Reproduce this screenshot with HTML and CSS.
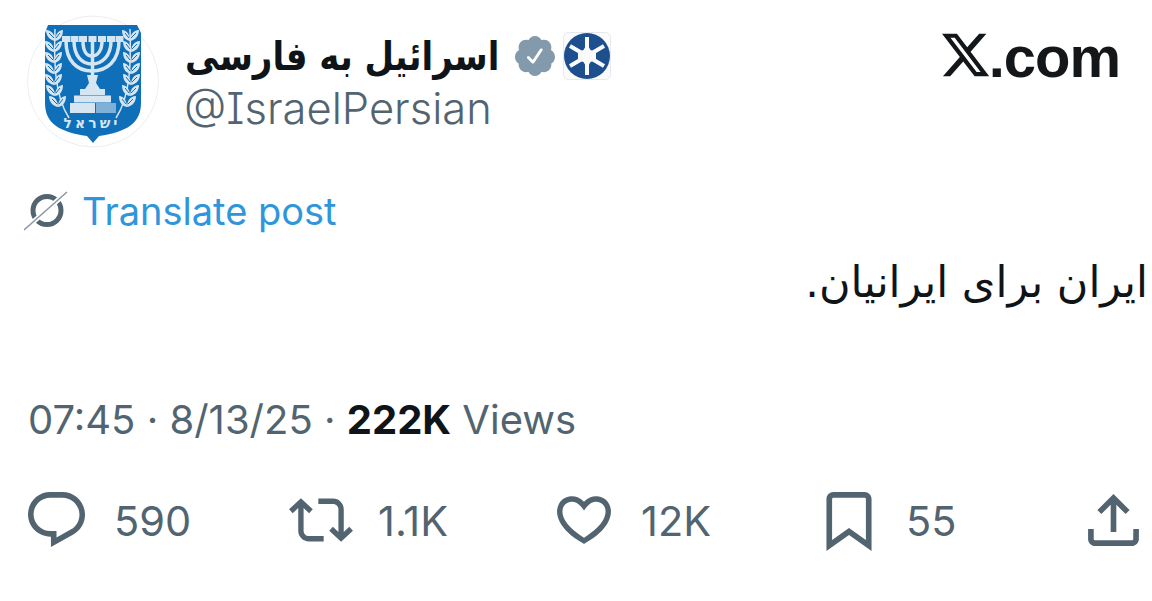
FILE: index.html
```html
<!DOCTYPE html>
<html lang="en">
<head>
  <meta charset="UTF-8">
  <title>Post</title>
  <link rel="stylesheet" href="styles.css">
</head>
<body>

  <div class="post">
    <div class="post-header">
      <div class="avatar">
        <svg viewBox="0 0 132 133" width="132" height="133">
          <defs>
            <g id="leaf-pair">
              <path d="M0 6C-6 5 -9 0 -9 -5C-3 -5 0 0 0 6Z" fill="#d5e5f2"/>
              <path d="M0 6C6 5 8 0 8 -5C3 -5 0 0 0 6Z" fill="#d5e5f2"/>
              <path d="M-1 3L-6 -2M1 3L5 -2" stroke="#0f6fb8" stroke-width="1"/>
            </g>
            <g id="branch">
              <path d="M28 14C27 45 27 80 42 103" fill="none" stroke="#d5e5f2" stroke-width="1.5"/>
              <use href="#leaf-pair" x="28" y="20"/>
              <use href="#leaf-pair" x="27" y="31"/>
              <use href="#leaf-pair" x="27" y="42"/>
              <use href="#leaf-pair" x="27" y="53"/>
              <use href="#leaf-pair" x="27" y="64"/>
              <use href="#leaf-pair" x="28" y="75"/>
              <use href="#leaf-pair" x="31" y="86"/>
            </g>
          </defs>
          <circle cx="66" cy="66.5" r="65.5" fill="#fff" stroke="#eeeeee"/>
          <path d="M21 10H110L114 18V88C114 108 100 117 72 121L66 128L60 121C32 117 18 108 18 88V18Z" fill="#0f6fb8"/>
          <use href="#branch"/>
          <use href="#branch" transform="translate(131 0) scale(-1 1)"/>
          <g fill="none" stroke="#d5e5f2" stroke-width="3.5">
            <path d="M39 26C39 46 50 56 65 56C80 56 92 46 92 26"/>
            <path d="M47 26C47 41 55 49 65 49C75 49 84 41 84 26"/>
            <path d="M56 26C56 35 59 41 65 41C71 41 75 35 75 26"/>
            <path d="M65.5 22V72"/>
          </g>
          <g fill="#d5e5f2">
            <rect x="35" y="21" width="8" height="6"/>
            <rect x="43.500" y="21" width="8" height="6"/>
            <rect x="52" y="21" width="8" height="6"/>
            <rect x="61.500" y="21" width="8" height="6"/>
            <rect x="71" y="21" width="8" height="6"/>
            <rect x="80" y="21" width="8" height="6"/>
            <rect x="88.500" y="21" width="8" height="6"/>
            <path d="M60 60H71L69 68L73 74H58L62 68Z"/>
            <rect x="53" y="74" width="25" height="6"/>
            <rect x="47" y="80.500" width="37" height="7"/>
            <rect x="43" y="88" width="25" height="10"/>
            <rect x="69" y="88" width="20" height="10" fill="#7fb0d8"/>
          </g>
          <text class="emblem-text" x="65" y="113" text-anchor="middle">ישראל</text>
        </svg>
      </div>

      <div class="names">
        <div class="name-row">
          <span class="name" dir="rtl">اسرائیل به فارسی</span>
          <svg class="badge" viewBox="1.500 1.500 21 21" width="40" height="40">
            <path fill-rule="evenodd" fill="#829aab" d="M22.5 12.5c0-1.58-.875-2.95-2.148-3.6.154-.435.238-.905.238-1.4 0-2.21-1.71-3.998-3.818-3.998-.47 0-.92.084-1.336.25C14.818 2.415 13.51 1.5 12 1.5s-2.816.917-3.437 2.25c-.415-.165-.866-.25-1.336-.25-2.11 0-3.818 1.79-3.818 4 0 .494.083.964.237 1.4-1.272.65-2.147 2.018-2.147 3.6 0 1.495.782 2.798 1.942 3.486-.02.17-.032.34-.032.514 0 2.21 1.708 4 3.818 4 .47 0 .92-.086 1.335-.25.62 1.334 1.926 2.25 3.437 2.25 1.512 0 2.818-.916 3.437-2.25.415.163.865.248 1.336.248 2.11 0 3.818-1.79 3.818-4 0-.174-.012-.344-.033-.513 1.158-.687 1.943-1.99 1.943-3.484zm-6.616-3.334l-4.334 6.5c-.145.217-.382.334-.625.334-.143 0-.288-.04-.416-.126l-.115-.094-2.415-2.415c-.293-.293-.293-.768 0-1.06s.768-.294 1.06 0l1.77 1.767 3.825-5.74c.23-.345.696-.436 1.04-.207.346.23.44.696.21 1.04z"/>
          </svg>
          <svg class="org-logo" viewBox="0 0 48 48" width="48" height="48">
            <rect x="0.5" y="0.5" width="47" height="47" rx="5" fill="#fbfbfc" stroke="#e6e8ec"/>
            <circle cx="24" cy="24" r="23" fill="#1d4f8e"/>
            <path d="M24 24V5M24 24V43M24 24L41 14M24 24L7 14M24 24L41 34M24 24L7 34" stroke="#fbfbfc" stroke-width="4"/>
            <path d="M24 12L27.500 18L33 20V28L27.500 30L24 36L20.500 30L15 28V20L20.500 18Z" fill="#fbfbfc"/>
          </svg>
        </div>
        <div class="handle">@IsraelPersian</div>
      </div>

      <div class="site-mark">
        <svg viewBox="1.25 2.25 21.5 19.5" width="47" height="44">
          <path fill="#14171a" d="M18.244 2.25h3.308l-7.227 8.26 8.502 11.24H16.17l-5.214-6.817L4.99 21.75H1.68l7.73-8.835L1.254 2.25H8.08l4.713 6.231zm-1.161 17.52h1.833L7.084 4.126H5.117z"/>
        </svg>
        <span>.com</span>
      </div>
    </div>

    <div class="translate">
      <svg viewBox="0 0 44 40" width="44" height="40">
        <circle cx="23" cy="19.500" r="14" fill="none" stroke="#536471" stroke-width="5"/>
        <path d="M43 1L0 39" stroke="#fff" stroke-width="5"/>
        <path d="M43 1L0 39" stroke="#8b98a3" stroke-width="1.500"/>
      </svg>
      <span>Translate post</span>
    </div>

    <div class="post-text" dir="rtl">ایران برای ایرانیان.</div>

    <div class="meta">07:45 · 8/13/25 · <b>222K</b> Views</div>

    <div class="actions">
      <div class="action">
        <svg viewBox="1.75 2 20.5 19.7" width="57" height="55">
          <path d="M1.751 10c0-4.42 3.584-8 8.005-8h4.366c4.49 0 8.129 3.64 8.129 8.13 0 2.96-1.607 5.68-4.196 7.11l-8.054 4.46v-3.69h-.067c-4.49.1-8.183-3.51-8.183-8.01zm8.005-6c-3.317 0-6.005 2.69-6.005 6 0 3.37 2.77 6.08 6.138 6.01l.351-.01h1.761v2.3l5.087-2.81c1.951-1.08 3.163-3.13 3.163-5.36 0-3.39-2.744-6.13-6.129-6.13H9.756z"/>
        </svg>
        <span>590</span>
      </div>
      <div class="action action-repost">
        <svg viewBox="0.05 3.8 23.9 16.4" width="64" height="44">
          <path d="M4.5 3.88l4.432 4.14-1.364 1.46L5.5 7.55V16c0 1.1.896 2 2 2H13v2H7.5c-2.209 0-4-1.79-4-4V7.55L1.432 9.48.068 8.02 4.5 3.88zM16.5 6H11V4h5.5c2.209 0 4 1.79 4 4v8.45l2.068-1.93 1.364 1.46-4.432 4.14-4.432-4.14 1.364-1.46 2.068 1.93V8c0-1.1-.896-2-2-2z"/>
        </svg>
        <span>1.1K</span>
      </div>
      <div class="action">
        <svg viewBox="1.7 3.4 20.6 17.8" width="56" height="48">
          <path d="M16.697 5.5c-1.222-.06-2.679.51-3.89 2.16l-.805 1.09-.806-1.09C9.984 6.01 8.526 5.44 7.304 5.5c-1.243.07-2.349.78-2.91 1.91-.552 1.12-.633 2.78.479 4.82 1.074 1.97 3.257 4.27 7.129 6.61 3.87-2.34 6.052-4.64 7.126-6.61 1.111-2.04 1.03-3.7.477-4.82-.561-1.13-1.666-1.84-2.908-1.91zm4.187 7.69c-1.351 2.48-4.001 5.12-8.379 7.67l-.503.3-.504-.3c-4.379-2.55-7.029-5.19-8.382-7.67-1.36-2.5-1.41-4.86-.514-6.67.887-1.79 2.647-2.91 4.601-3.01 1.651-.09 3.368.56 4.798 2.01 1.429-1.45 3.146-2.1 4.796-2.01 1.954.1 3.714 1.22 4.601 3.01.896 1.81.846 4.17-.514 6.67z"/>
        </svg>
        <span>12K</span>
      </div>
      <div class="action action-bookmark">
        <svg viewBox="4 2 16 20.94" width="46" height="59">
          <path d="M4 4.5C4 3.12 5.119 2 6.5 2h11C18.881 2 20 3.12 20 4.5v18.44l-8-5.71-8 5.71V4.5zM6.5 4c-.276 0-.5.22-.5.5v14.56l6-4.29 6 4.29V4.5c0-.28-.224-.5-.5-.5h-11z"/>
        </svg>
        <span>55</span>
      </div>
      <div class="action">
        <svg viewBox="3 2.59 18 18.41" width="51" height="52">
          <path d="M12 2.59l5.7 5.7-1.41 1.42L13 6.41V16h-2V6.41l-3.3 3.3-1.41-1.42L12 2.59zM21 15l-.02 3.51c0 1.38-1.12 2.49-2.5 2.49H5.5C4.12 21 3 19.88 3 18.5V15h2v3.5c0 .28.22.5.5.5h12.98c.28 0 .5-.22.5-.5L19 15h2z"/>
        </svg>
      </div>
    </div>
  </div>

</body>
</html>
```

FILE: styles.css
```css
body {
  margin: 0;
  background: #fff;
  font-family: Inter, "Noto Sans", "DejaVu Sans", sans-serif;
  color: #536471;
}

.post {
  height: 601px;
  padding: 15px 4px 0 27px;
  box-sizing: border-box;
  overflow: hidden;
}

.post-header {
  display: flex;
  align-items: flex-start;
  height: 133px;
}

.avatar {
  width: 132px;
  height: 133px;
}

.avatar svg,
.action svg,
.translate svg,
.site-mark svg,
.name-row svg {
  display: block;
  flex: none;
}

.emblem-text {
  font-family: "DejaVu Sans", sans-serif;
  font-size: 14px;
  font-weight: bold;
  fill: #d5e5f2;
  letter-spacing: 3px;
}

.names {
  margin-left: 26px;
  display: flex;
  flex-direction: column;
}

.name-row {
  display: flex;
  align-items: center;
  width: 425px;
  height: 52px;
  margin-top: 15px;
}

.name {
  flex: none;
  margin-right: -40px;
  font-family: "DejaVu Sans", sans-serif;
  font-size: 40px;
  font-weight: bold;
  color: #0f1419;
  white-space: nowrap;
  transform: scaleX(0.85);
  transform-origin: left center;
}

.badge {
  margin-right: 8px;
}

.handle {
  margin-left: -1px;
  font-size: 43.5px;
  font-weight: 300;
  font-feature-settings: "cv08";
  line-height: 50px;
  margin-top: 1px;
}

.site-mark {
  margin-left: auto;
  margin-right: 28px;
  margin-top: 18px;
  display: flex;
  align-items: flex-end;
  font-family: "Liberation Sans", sans-serif;
  font-weight: bold;
  font-size: 58px;
  letter-spacing: -1px;
  line-height: 44px;
  color: #14171a;
}

.site-mark span {
  margin-bottom: -2px;
}

.translate {
  display: flex;
  align-items: center;
  gap: 14px;
  margin-top: 42px;
  height: 42px;
  margin-left: -3px;
  font-size: 38px;
  color: #2f96dc;
}

.post-text {
  margin-top: 25px;
  font-family: "DejaVu Sans", sans-serif;
  font-size: 43px;
  line-height: 50px;
  color: #0f1419;
}

.meta {
  margin-top: 89px;
  margin-left: 1px;
  font-size: 40px;
  line-height: 48px;
}

.meta b {
  color: #0f1419;
}

.actions {
  display: grid;
  grid-template-columns: 261px 267px 270px 262px auto;
  margin-top: 44px;
  margin-left: 1px;
  height: 60px;
  align-items: center;
}

.action {
  display: flex;
  align-items: center;
  gap: 29px;
  font-size: 41.5px;
}

.action span {
  padding-top: 3px;
}

.action svg {
  fill: #536471;
}

.action-repost {
  gap: 25px;
}

.action-bookmark {
  gap: 34px;
}

.action-bookmark svg {
  margin-top: 4px;
}
```
